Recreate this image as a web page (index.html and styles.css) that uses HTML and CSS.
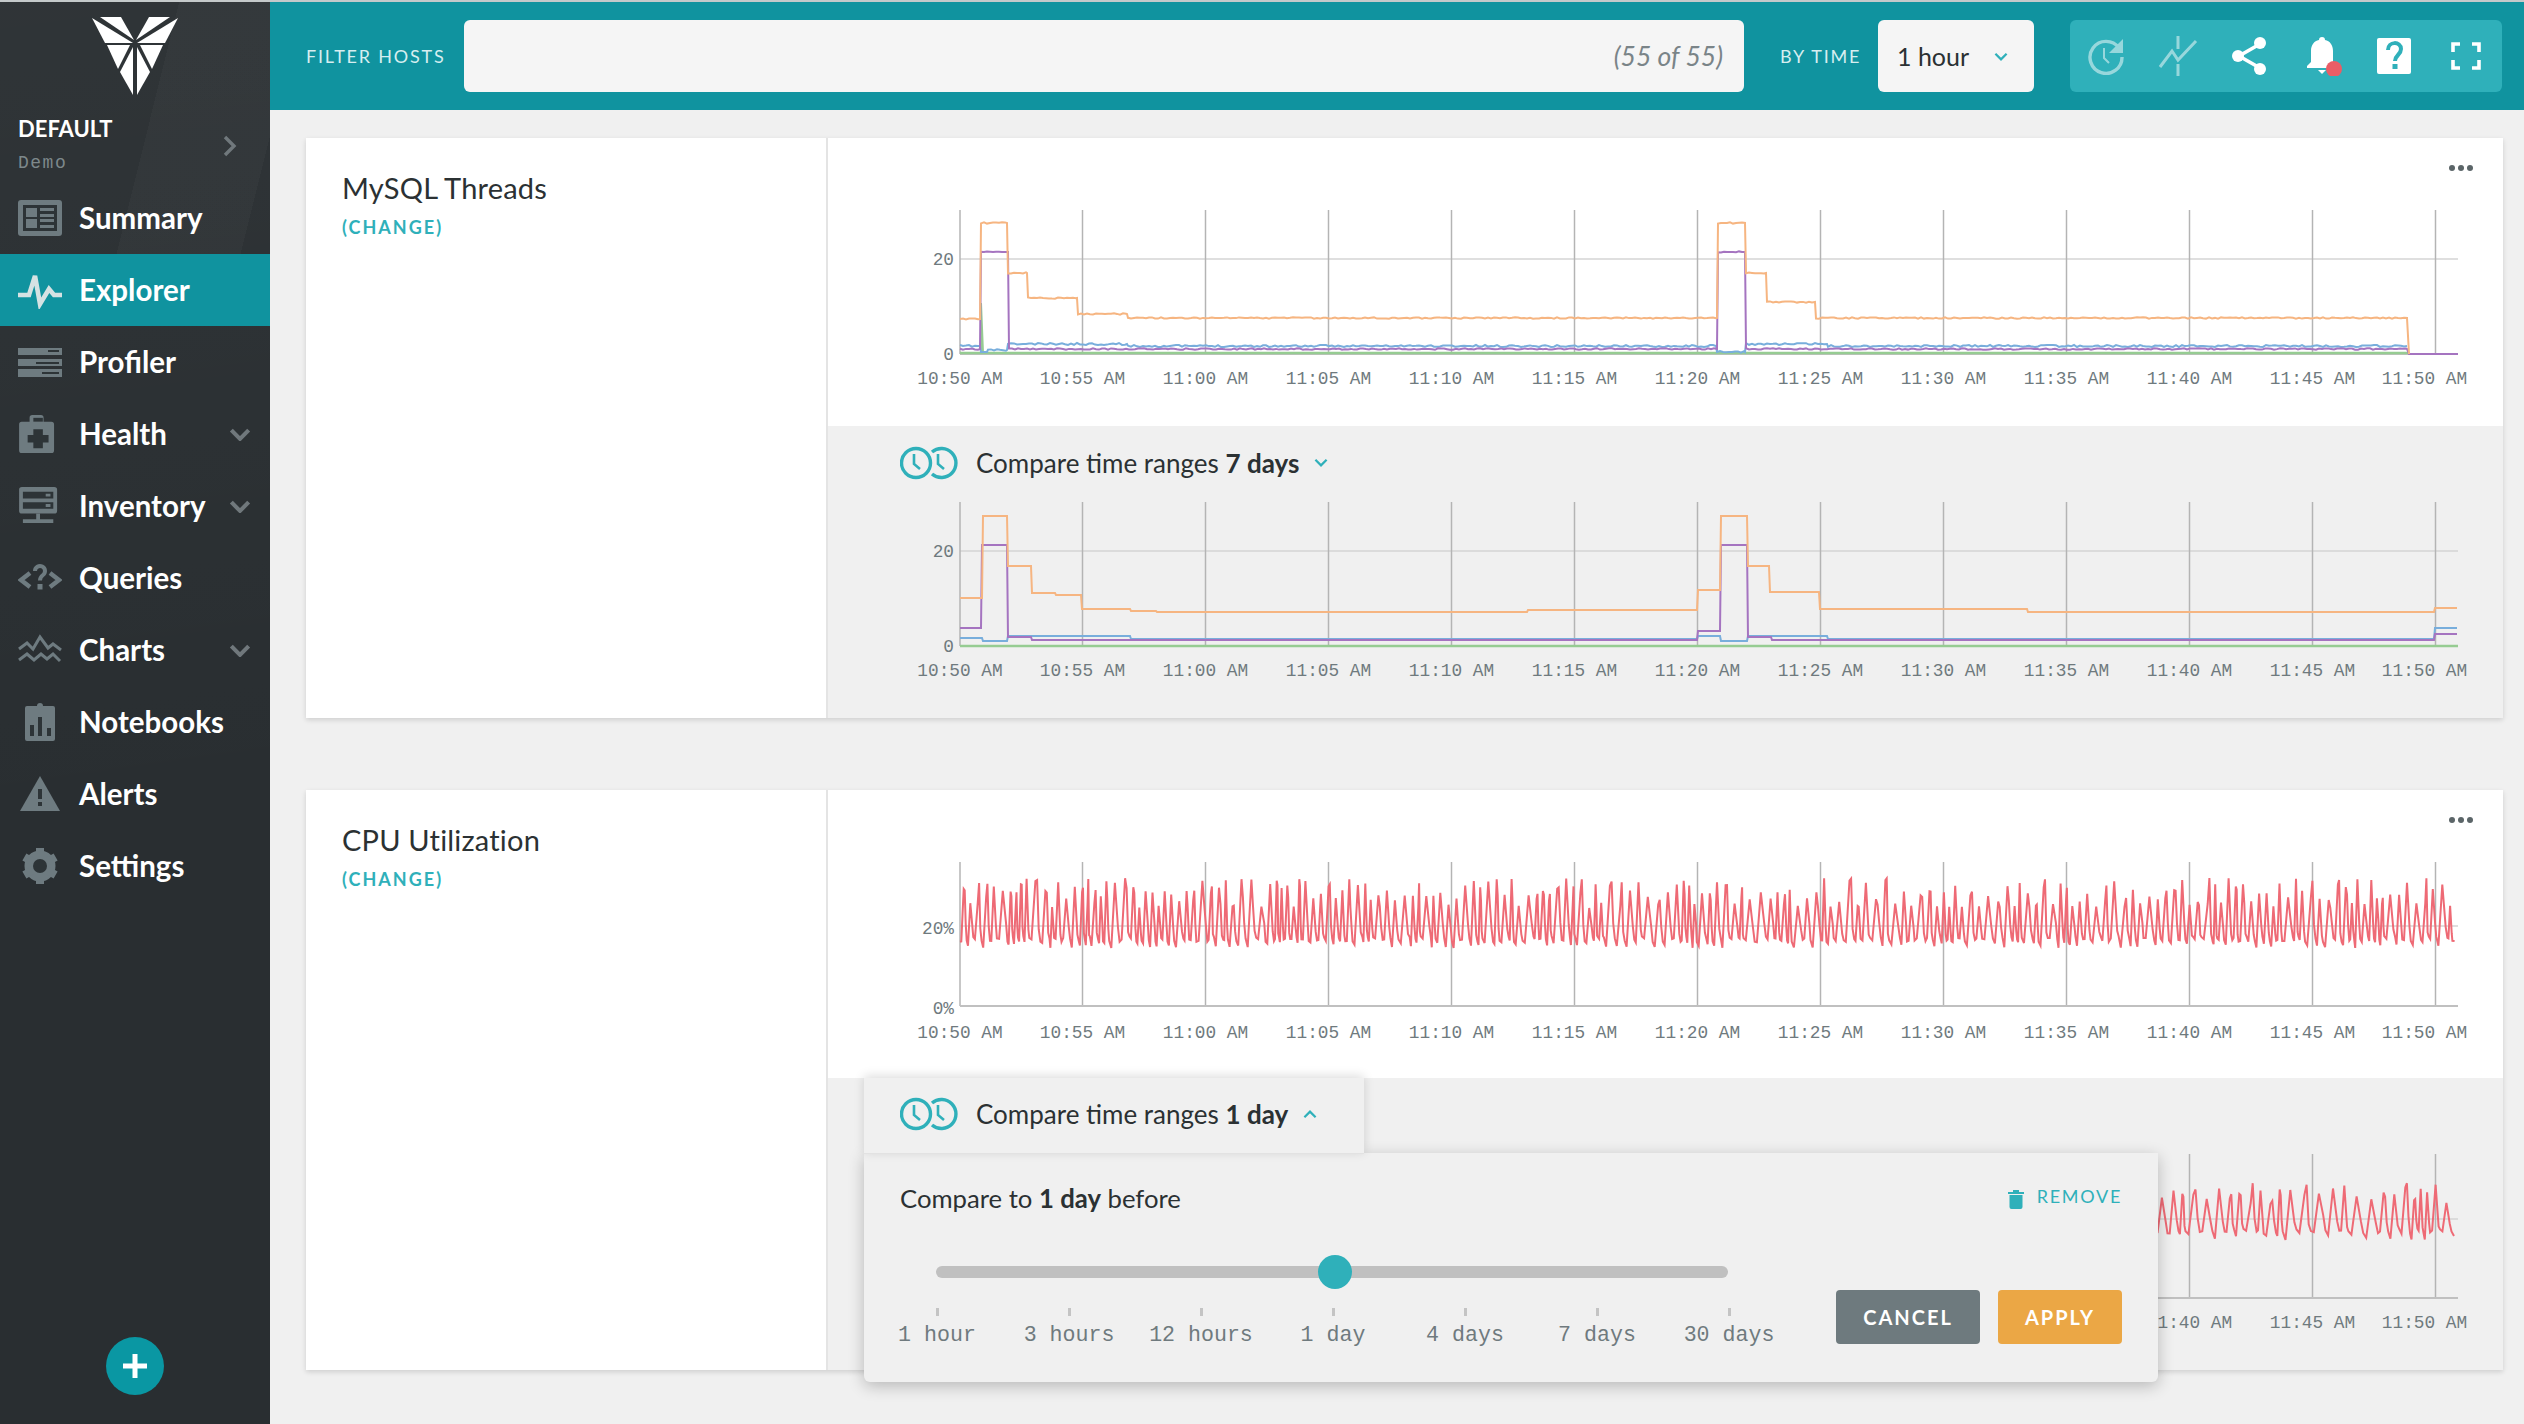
FILE: index.html
```html
<!DOCTYPE html>
<html lang="en">
<head>
  <meta charset="UTF-8" />
  <title>Explorer</title>
  <link rel="stylesheet" href="styles.css">
</head>
<body>

  <svg class="defs" width="0" height="0">
    <symbol id="i-compare" viewBox="0 0 58 34">
      <circle cx="16" cy="17" r="14.5" fill="none" stroke="#2fb0ba" stroke-width="3.4"/>
      <path d="M14 8v10l6 5" fill="none" stroke="#2fb0ba" stroke-width="2.6"/>
      <path d="M32 6a14.5 14.500 0 1 1 0 22" fill="none" stroke="#2fb0ba" stroke-width="3.4"/>
      <path d="M38 8v10l6 5" fill="none" stroke="#2fb0ba" stroke-width="2.6"/>
    </symbol>
    <symbol id="i-down" viewBox="0 0 20 12">
      <path d="M2 2l8 8 8-8" fill="none" stroke="currentColor"/>
    </symbol>
  </svg>

  <div class="app">
    <aside class="sidebar">
      <svg class="logo" viewBox="0 0 90 80" width="90" height="80">
        <g fill="#fff">
          <polygon points="2,1 43,26 15,26"/>
          <polygon points="10,0 31,0 44,23"/>
          <polygon points="88,1 47,26 75,26"/>
          <polygon points="80,0 59,0 46,23"/>
          <polygon points="17,28 40,28 28,52"/>
          <polygon points="73,28 50,28 62,52"/>
          <polygon points="43,30 30,55 43,78"/>
          <polygon points="47,30 60,55 47,78"/>
        </g>
      </svg>

      <div class="org">
        <div class="org-text">
          <div class="org-name">DEFAULT</div>
          <div class="org-sub">Demo</div>
        </div>
        <svg class="org-arrow" viewBox="0 0 14 22" width="14" height="22">
          <path d="M2 2l9 9-9 9" fill="none" stroke="#70787c" stroke-width="3.4"/>
        </svg>
      </div>

      <nav class="nav">
        <a class="nav-item">
          <svg class="nav-icon" viewBox="0 0 44 36">
            <rect width="44" height="36" rx="3" fill="#6e7b80"/>
            <rect x="5" y="5" width="34" height="26" fill="#2d3437"/>
            <path d="M8 8h11v9H8zM8 19h11v9H8zM22 8h14v3H22zM22 14h14v3H22zM22 19h14v3H22zM22 25h14v3H22z" fill="#6e7b80"/>
          </svg>
          <span>Summary</span>
        </a>
        <a class="nav-item active">
          <svg class="nav-icon" viewBox="0 0 44 36">
            <path d="M0 23h11l6-19 5 28 9-15 5 6h8" fill="none" stroke="#d5e2e3" stroke-width="4.6"/>
          </svg>
          <span>Explorer</span>
        </a>
        <a class="nav-item">
          <svg class="nav-icon" viewBox="0 0 44 36">
            <path d="M0 4h44v7H0zM0 15h44v7H0zM0 25h44v8H0z" fill="#6e7b80"/>
            <path d="M30 6h11v2H30zM18 18h23v2H18zM24 28h17v2H24z" fill="#2d3437"/>
          </svg>
          <span>Profiler</span>
        </a>
        <a class="nav-item">
          <svg class="nav-icon" viewBox="0 0 44 40">
            <path d="M3 7h9V3a3 3 0 0 1 3-3h10a3 3 0 0 1 3 3v4h9a3 3 0 0 1 3 3v27a3 3 0 0 1-3 3H3a3 3 0 0 1-3-3V10a3 3 0 0 1 3-3z" fill="#6e7b80" transform="scale(.92 1)"/>
            <path d="M15 3h10v4H15z" fill="#2d3437"/>
            <path d="M15 15h10v6h6v8h-6v6H15v-6H9v-8h6z" fill="#2d3437"/>
          </svg>
          <span>Health</span>
          <svg class="nav-chevron"><use href="#i-down"/></svg>
        </a>
        <a class="nav-item">
          <svg class="nav-icon" viewBox="0 0 44 40">
            <rect x="0" y="0" width="40" height="28" rx="3" fill="#6e7b80"/>
            <path d="M4 5h32v7H4zM4 16h32v7H4z" fill="#2d3437"/>
            <path d="M28 7h5v3h-5zM28 18h5v3h-5z" fill="#6e7b80"/>
            <path d="M18 28h4v6h-4zM4 34h32v4H4z" fill="#6e7b80"/>
          </svg>
          <span>Inventory</span>
          <svg class="nav-chevron"><use href="#i-down"/></svg>
        </a>
        <a class="nav-item">
          <svg class="nav-icon" viewBox="0 0 44 36">
            <path d="M12 13l-9 7 9 7M32 13l9 7-9 7" fill="none" stroke="#6e7b80" stroke-width="4.400"/>
            <path d="M17 11a5 5 0 1 1 8 4c-2 1.500-3 2.500-3 5.500" fill="none" stroke="#6e7b80" stroke-width="4"/>
            <rect x="19.500" y="24" width="5" height="5.500" fill="#6e7b80"/>
          </svg>
          <span>Queries</span>
        </a>
        <a class="nav-item">
          <svg class="nav-icon" viewBox="0 0 44 36">
            <path d="M1 17l8-6 6 6 7-12 8 11 5-4 8 6M1 28l8-6 7 6 7-6 6 5 6-5 7 7" fill="none" stroke="#6e7b80" stroke-width="3"/>
          </svg>
          <span>Charts</span>
          <svg class="nav-chevron"><use href="#i-down"/></svg>
        </a>
        <a class="nav-item">
          <svg class="nav-icon" viewBox="0 0 44 38">
            <path d="M9 3h10a3 3 0 0 1 6 0h10a2 2 0 0 1 2 2v31a2 2 0 0 1-2 2H9a2 2 0 0 1-2-2V5a2 2 0 0 1 2-2z" fill="#6e7b80"/>
            <path d="M12 22h4v11h-4zM20 14h4v19h-4zM29 25h4v8h-4z" fill="#2d3437"/>
          </svg>
          <span>Notebooks</span>
        </a>
        <a class="nav-item">
          <svg class="nav-icon" viewBox="0 0 44 36">
            <path d="M22 0l20 35H2z" fill="#6e7b80"/>
            <path d="M20 13h4v10h-4zM20 26h4v4h-4z" fill="#2d3437"/>
          </svg>
          <span>Alerts</span>
        </a>
        <a class="nav-item">
          <svg class="nav-icon" viewBox="0 0 44 38">
            <circle cx="22" cy="19" r="11.500" fill="none" stroke="#6e7b80" stroke-width="8"/>
            <path d="M22 1v36M6.400 10l31.200 18M6.400 28l31.200-18" stroke="#6e7b80" stroke-width="8"/>
            <circle cx="22" cy="19" r="7" fill="#2d3437"/>
          </svg>
          <span>Settings</span>
        </a>
      </nav>

      <button class="add-btn">
        <svg viewBox="0 0 24 24" width="24" height="24"><path d="M9.500 0h5v9.500H24v5h-9.500V24h-5v-9.500H0v-5h9.500z" fill="#fff"/></svg>
      </button>
    </aside>

    <main class="main">
      <header class="topbar">
        <span class="bar-label filter-label">FILTER HOSTS</span>
        <div class="filter-input">(55 of 55)</div>
        <span class="bar-label time-label">BY TIME</span>
        <div class="time-select">
          <span>1 hour</span>
          <svg width="14" height="9"><use href="#i-down"/></svg>
        </div>
        <div class="tools">
          <svg class="tool faded" viewBox="0 0 40 40">
            <path d="M33 12A16 16 0 1 0 36 21" fill="none" stroke="#fff" stroke-width="3.400"/>
            <path d="M37 3v14H23z" fill="#fff"/>
            <path d="M18 12v10l5 5" fill="none" stroke="#fff" stroke-width="2"/>
          </svg>
          <svg class="tool faded" viewBox="0 0 40 40">
            <path d="M2 31l12-16 6 9L38 5" fill="none" stroke="#fff" stroke-width="3"/>
            <path d="M20 0v13M20 28v12" stroke="#fff" stroke-width="3"/>
          </svg>
          <svg class="tool" viewBox="0 0 40 40">
            <path d="M30 8L9 20l21 12" fill="none" stroke="#fff" stroke-width="3.600"/>
            <circle cx="30" cy="7" r="6" fill="#fff"/>
            <circle cx="8" cy="20" r="6" fill="#fff"/>
            <circle cx="30" cy="33" r="6" fill="#fff"/>
          </svg>
          <svg class="tool" viewBox="0 0 40 40">
            <path d="M20 1c2 0 3 1 3 3 5 1 8 5 8 11v11l4 4v2H5v-2l4-4V15c0-6 3-10 8-11 0-2 1-3 3-3z" fill="#fff"/>
            <path d="M16 34h8l-4 4z" fill="#fff"/>
            <circle cx="32" cy="33" r="8" fill="#ea5d66"/>
          </svg>
          <svg class="tool" viewBox="0 0 40 40">
            <rect x="3" y="2" width="34" height="36" rx="2" fill="#fff"/>
            <path d="M14 14c0-9 13-9 13-1 0 6-6 6-6 12" fill="none" stroke="#2fb0ba" stroke-width="4"/>
            <rect x="18.500" y="28" width="5" height="5" fill="#2fb0ba"/>
          </svg>
          <svg class="tool" viewBox="0 0 40 40">
            <path d="M14 8H7v8M26 8h7v8M14 32H7v-8M26 32h7v-8" fill="none" stroke="#fff" stroke-width="3.600"/>
          </svg>
        </div>
      </header>

      <section class="panel">
        <div class="panel-side">
          <h2 class="panel-title">MySQL Threads</h2>
          <a class="panel-change">(CHANGE)</a>
        </div>
        <div class="panel-body">
          <div class="more"><i></i><i></i><i></i></div>
          <div class="chart-main" id="threads"></div>
          <div class="compare">
            <div class="compare-head">
              <svg width="58" height="34"><use href="#i-compare"/></svg>
              <span>Compare time ranges <b>7 days</b></span>
              <svg class="head-chevron" width="14" height="9"><use href="#i-down"/></svg>
            </div>
            <div class="chart-compare" id="threadsCompare"></div>
          </div>
        </div>
      </section>

      <section class="panel">
        <div class="panel-side">
          <h2 class="panel-title">CPU Utilization</h2>
          <a class="panel-change">(CHANGE)</a>
        </div>
        <div class="panel-body">
          <div class="more"><i></i><i></i><i></i></div>
          <div class="chart-main" id="cpu"></div>
          <div class="compare">
            <div class="compare-head"></div>
            <div class="chart-compare" id="cpuCompare"></div>

            <div class="popup-tab">
              <svg width="58" height="34"><use href="#i-compare"/></svg>
              <span>Compare time ranges <b>1 day</b></span>
              <svg class="head-chevron up" width="14" height="9"><use href="#i-down"/></svg>
            </div>
            <div class="popup">
              <div class="popup-top">
                <span>Compare to <b>1 day</b> before</span>
                <a class="remove">
                  <svg viewBox="0 0 16 20" width="16" height="20">
                    <path d="M0 3h16v2H0zM5 1h6v2H5zM1.500 6h13v12a2 2 0 0 1-2 2h-9a2 2 0 0 1-2-2z" fill="#2fb0ba"/>
                  </svg>
                  REMOVE
                </a>
              </div>
              <div class="popup-bottom">
                <div class="slider">
                  <div class="slider-track"><div class="slider-thumb"></div></div>
                  <div class="slider-stops">
                    <div class="stop"><i></i>1 hour</div>
                    <div class="stop"><i></i>3 hours</div>
                    <div class="stop"><i></i>12 hours</div>
                    <div class="stop"><i></i>1 day</div>
                    <div class="stop"><i></i>4 days</div>
                    <div class="stop"><i></i>7 days</div>
                    <div class="stop"><i></i>30 days</div>
                  </div>
                </div>
                <div class="popup-btns">
                  <button class="btn btn-cancel">CANCEL</button>
                  <button class="btn btn-apply">APPLY</button>
                </div>
              </div>
            </div>
          </div>
        </div>
      </section>
    </main>
  </div>

  <script src="charts.js"></script>
</body>
</html>
```

FILE: styles.css
```css
* {
  box-sizing: border-box;
}

html, body {
  height: 100%;
}

body {
  margin: 0;
  overflow: hidden;
  font-family: Lato, 'Noto Sans', sans-serif;
  background: #f0f0f0;
  color: #2b3133;
}

.defs {
  position: absolute;
}

.app {
  display: flex;
  height: 1424px;
}

/* sidebar */
.sidebar {
  position: relative;
  flex: 0 0 270px;
  border-top: 2px solid #c4c9ca;
  color: #fff;
  background:
    linear-gradient(104deg, rgba(255,255,255,0) 52%, rgba(255,255,255,.025) 52%, rgba(255,255,255,.025) 88%, rgba(255,255,255,0) 88%) 0 0 / 100% 300px no-repeat,
    linear-gradient(172deg, rgba(255,255,255,.03) 0, rgba(255,255,255,0) 58%),
    #292e31;
}

.logo {
  display: block;
  margin: 15px 0 0 90px;
}

.org {
  display: flex;
  align-items: center;
  justify-content: space-between;
  height: 70px;
  margin-top: 14px;
  padding: 0 33px 0 18px;
}

.org-text {
  padding-bottom: 5px;
}

.org-name {
  font-size: 22px;
  font-weight: 700;
  line-height: 28px;
}

.org-sub {
  margin-top: 10px;
  font-family: 'Liberation Mono', monospace;
  font-size: 18px;
  letter-spacing: 1.5px;
  color: #7d888b;
}

.nav {
  margin-top: 1px;
}

.nav-item {
  display: flex;
  align-items: center;
  height: 72px;
  padding: 0 19px 0 18px;
  font-size: 29.5px;
  font-weight: 700;
}

.nav-item span {
  margin-bottom: 2px;
}

.nav-item.active {
  background: #10939f;
}

.nav-icon {
  flex: 0 0 44px;
  height: 38px;
  margin-right: 17px;
}

.nav-chevron {
  width: 22px;
  height: 13px;
  margin-left: auto;
  color: #70787c;
  stroke-width: 3.8;
}

.add-btn {
  position: absolute;
  left: 106px;
  bottom: 29px;
  display: flex;
  align-items: center;
  justify-content: center;
  width: 58px;
  height: 58px;
  padding: 0;
  border: none;
  border-radius: 50%;
  background: #0a97a3;
}

/* top bar */
.main {
  flex: 1;
  min-width: 0;
}

.topbar {
  display: flex;
  align-items: center;
  height: 110px;
  padding: 0 22px 0 36px;
  border-top: 2px solid #c4c9ca;
  background: #10939f;
}

.bar-label {
  font-size: 18px;
  letter-spacing: 1.8px;
  color: #d6eef0;
}

.filter-label {
  width: 158px;
}

.filter-input {
  flex: 1;
  height: 72px;
  padding-right: 21px;
  border-radius: 6px;
  background: #f5f5f5;
  font-size: 26.5px;
  font-style: italic;
  line-height: 72px;
  text-align: right;
  color: #7a8488;
}

.time-label {
  margin-left: 36px;
  width: 98px;
}

.time-select {
  display: flex;
  align-items: center;
  justify-content: space-between;
  width: 156px;
  height: 72px;
  padding: 0 26px 0 19px;
  border-radius: 6px;
  background: #f5f5f5;
  font-size: 25px;
  color: #2b3133;
}

.time-select svg {
  color: #2fb0ba;
  stroke-width: 3.2;
}

.tools {
  display: flex;
  align-items: center;
  justify-content: space-between;
  width: 432px;
  height: 72px;
  margin-left: 36px;
  padding: 0 16px;
  border-radius: 6px;
  background: #2fb0ba;
}

.tool {
  width: 40px;
  height: 40px;
}

.tool.faded {
  opacity: .5;
}

/* chart panels */
.panel {
  display: flex;
  width: 2197px;
  height: 580px;
  margin: 28px 0 72px 36px;
  background: #fff;
  box-shadow: 0 2px 5px rgba(0,0,0,.14);
}

.panel + .panel {
  margin-top: 0;
}

.panel-side {
  flex: 0 0 522px;
  padding: 32px 36px;
  border-right: 2px solid #e4e4e4;
}

.panel-title {
  margin: 0;
  font-size: 29px;
  font-weight: 400;
  letter-spacing: .2px;
  line-height: 36px;
}

.panel-change {
  display: block;
  margin-top: 10px;
  font-size: 18px;
  font-weight: 700;
  letter-spacing: 2px;
  color: #2fb0ba;
}

.panel-body {
  position: relative;
  flex: 1;
  min-width: 0;
}

.more {
  position: absolute;
  top: 27px;
  right: 30px;
  display: flex;
  gap: 3px;
}

.more i {
  width: 6px;
  height: 6px;
  border-radius: 50%;
  background: #5b6568;
}

.chart-main {
  height: 288px;
}

.compare {
  position: relative;
  height: 292px;
  background: #f0f0f0;
}

.compare-head {
  display: flex;
  align-items: center;
  height: 76px;
  padding: 0 0 3px 72px;
  font-size: 26px;
}

.compare-head span,
.popup-tab span {
  margin: 0 15px 0 18px;
}

.head-chevron {
  color: #2fb0ba;
  stroke-width: 3.2;
}

.head-chevron.up {
  transform: rotate(180deg);
}

.chart-compare {
  height: 216px;
}

.chart-svg {
  display: block;
}

.tick-label {
  font-family: 'Liberation Mono', monospace;
  font-size: 17.8px;
  fill: #6f7a7e;
}

/* compare popup */
.popup-tab {
  position: absolute;
  top: 0;
  left: 36px;
  z-index: 2;
  display: flex;
  align-items: center;
  width: 500px;
  height: 76px;
  padding: 0 0 3px 36px;
  border-bottom: 1px solid #e2e2e2;
  background: #f0f0f0;
  box-shadow: 0 -2px 10px rgba(0,0,0,.14);
  font-size: 26px;
}

.popup {
  position: absolute;
  top: 75px;
  left: 36px;
  z-index: 1;
  width: 1294px;
  height: 229px;
  padding: 30px 36px 0;
  border-radius: 0 0 6px 6px;
  background: #f0f0f0;
  box-shadow: 0 4px 16px rgba(0,0,0,.24);
  font-size: 25.7px;
}

.popup-top {
  display: flex;
  align-items: flex-start;
  justify-content: space-between;
}

.remove {
  display: flex;
  align-items: center;
  gap: 13px;
  font-size: 18px;
  letter-spacing: 1.7px;
  color: #2fb0ba;
}

.remove svg {
  margin-top: 6px;
}

.popup-bottom {
  display: flex;
  justify-content: space-between;
  margin-top: 41px;
}

.slider {
  width: 900px;
}

.slider-track {
  position: relative;
  width: 792px;
  height: 12px;
  margin: 12px 0 0 36px;
  border-radius: 6px;
  background: #c0c0c0;
}

.slider-thumb {
  position: absolute;
  top: -11px;
  left: 382px;
  width: 34px;
  height: 34px;
  border-radius: 50%;
  background: #2fb0ba;
}

.slider-stops {
  display: flex;
  margin: 30px 0 0 -29px;
}

.stop {
  display: flex;
  flex-direction: column;
  align-items: center;
  width: 132px;
  font-family: 'Liberation Mono', monospace;
  font-size: 21.6px;
  color: #6f7a7e;
  white-space: nowrap;
}

.stop i {
  width: 3px;
  height: 8px;
  margin-bottom: 7px;
  background: #c4c4c4;
}

.popup-btns {
  display: flex;
  gap: 18px;
  margin-top: 36px;
}

.btn {
  height: 54px;
  border: none;
  border-radius: 4px;
  font-family: inherit;
  font-size: 20px;
  font-weight: 700;
  letter-spacing: 2px;
  color: #fff;
}

.btn-cancel {
  width: 144px;
  background: #6e7a7e;
}

.btn-apply {
  width: 124px;
  background: #eba745;
}
```

FILE: charts.js
```js
// plain svg line charts, coordinates are px inside the panel body
const TIMES = ["10:50 AM", "10:55 AM", "11:00 AM", "11:05 AM", "11:10 AM", "11:15 AM", "11:20 AM",
  "11:25 AM", "11:30 AM", "11:35 AM", "11:40 AM", "11:45 AM", "11:50 AM"];
const LEFT = 132;
const RIGHT = 1630;
const STEP = 123;

const ORANGE = "#f6b581";
const PURPLE = "#a574c0";
const BLUE = "#78aedc";
const GREEN = "#96cc92";
const RED = "#ee6a75";

let seed = 11;
function rnd() {
  seed = (seed * 16807) % 2147483647;
  return seed / 2147483647;
}

// steps: [[x, y], ...] each y holds until the next x
function stepLine(steps, end, jitter) {
  const pts = [];
  steps.forEach((s, i) => {
    const next = i < steps.length - 1 ? steps[i + 1][0] : end;
    for (let x = s[0]; x < next - 1; x += 3) {
      pts.push([x, s[1] + (rnd() - 0.5) * jitter]);
    }
    pts.push([next - 1, s[1]]);
  });
  return pts;
}

function spikes(top, base, period, spread) {
  const pts = [];
  let x = LEFT;
  while (x < RIGHT) {
    const p = period * (0.6 + rnd() * 0.9);
    pts.push([x, base - rnd() * 6]);
    pts.push([x + p * 0.2, base + 6 - rnd() * 10]);
    pts.push([x + p * 0.55, top + rnd() * spread]);
    if (rnd() > 0.6) pts.push([x + p * 0.7, top + rnd() * spread]);
    pts.push([x + p * 0.85, base - 6 - rnd() * 14]);
    x += p;
  }
  return pts.filter(p => p[0] <= RIGHT);
}

function drawChart(id, opts) {
  const h = opts.height;
  const from = opts.labelsFrom || 0; // labels left of this sit under the popup
  const gap = opts.labelGap || 30;
  const shift = opts.yShift || 0;
  let out = `<svg class="chart-svg" width="1675" height="${h}">`;
  out += `<line x1="${LEFT}" x2="${RIGHT}" y1="${opts.mid}" y2="${opts.mid}" stroke="#d4d4d4" stroke-width="1.5"/>`;
  TIMES.forEach((t, i) => {
    const x = LEFT + STEP * i - (i === 0 ? 0 : 0.5);
    const labelX = i === TIMES.length - 1 ? x - 11 : x;
    out += `<line x1="${x}" x2="${x}" y1="${opts.top}" y2="${opts.zero}" stroke="#b4b4b4" stroke-width="1.5"/>`;
    if (i >= from) {
      out += `<text class="tick-label" x="${labelX}" y="${opts.zero + gap}" text-anchor="middle">${t}</text>`;
    }
  });
  out += `<line x1="${LEFT}" x2="${RIGHT}" y1="${opts.zero}" y2="${opts.zero}" stroke="#c0c0c0" stroke-width="2"/>`;
  if (!from) {
    out += `<text class="tick-label" x="${LEFT - 6}" y="${opts.mid + 6 + shift}" text-anchor="end">${opts.midLabel}</text>`;
    out += `<text class="tick-label" x="${LEFT - 6}" y="${opts.zero + 6 + shift}" text-anchor="end">${opts.zeroLabel}</text>`;
  }
  opts.lines.forEach(l => {
    const d = l.pts.map(p => p[0].toFixed(1) + " " + p[1].toFixed(1)).join("L");
    out += `<path d="M${d}" fill="none" stroke="${l.color}" stroke-width="${l.width || 2}"/>`;
  });
  out += "</svg>";
  document.getElementById(id).innerHTML = out;
}

drawChart("threads", {
  height: 288, top: 72, mid: 121, zero: 216, midLabel: "20", zeroLabel: "0",
  lines: [
    { color: GREEN, width: 2.5, pts: [[LEFT, 215], [1580, 215]] },
    { color: GREEN, pts: [[153, 215], [153, 165], [155, 215]] },
    { color: BLUE, pts: stepLine([[LEFT, 208], [153, 214], [160, 212], [180, 206], [300, 208], [889, 214], [918, 206], [1000, 208]], 1580, 2) },
    { color: PURPLE, pts: stepLine([[LEFT, 211], [153, 114], [181, 211], [890, 114], [918, 211]], 1580, 1.6).concat([[1581, 216], [RIGHT, 216]]) },
    { color: ORANGE, pts: stepLine([[LEFT, 181], [153, 85], [180, 135], [200, 160], [250, 176], [300, 180], [890, 85], [918, 135], [939, 164], [988, 180]], 1580, 1.4).concat([[1581, 216]]) }
  ]
});

drawChart("threadsCompare", {
  height: 216, top: 0, mid: 49, zero: 144, midLabel: "20", zeroLabel: "0",
  lines: [
    { color: GREEN, width: 2.5, pts: [[LEFT, 144], [RIGHT, 144]] },
    { color: BLUE, pts: stepLine([[LEFT, 136], [155, 139], [180, 134], [303, 137], [870, 134], [893, 139], [920, 134], [1000, 137], [1607, 126]], RIGHT, 0) },
    { color: PURPLE, pts: stepLine([[LEFT, 126], [154, 43], [180, 135], [204, 138], [870, 129], [893, 43], [920, 135], [944, 138], [1607, 132]], RIGHT, 0) },
    { color: ORANGE, pts: stepLine([[LEFT, 96], [155, 14], [180, 64], [204, 91], [228, 93], [254, 107], [303, 109], [329, 110], [700, 108], [870, 88], [893, 14], [920, 64], [942, 90], [992, 107], [1200, 110], [1607, 106]], RIGHT, 0) }
  ]
});

drawChart("cpu", {
  height: 288, top: 72, mid: 136, zero: 216, midLabel: "20%", zeroLabel: "0%", labelGap: 32, yShift: 2,
  lines: [{ color: RED, pts: spikes(88, 152, 7.5, 30) }]
});

drawChart("cpuCompare", {
  height: 216, top: 0, mid: 65, zero: 144, labelsFrom: 10,
  lines: [{ color: RED, pts: spikes(28, 80, 10, 22) }]
});
```
